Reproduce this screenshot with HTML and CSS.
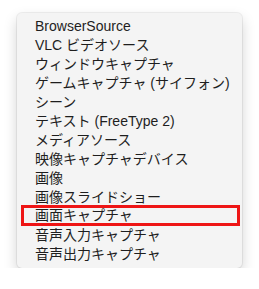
FILE: index.html
```html
<!doctype html>
<html lang="ja">

<head>
  <title>ソースを追加</title>
  <meta charset="utf-8" />
  <link rel="stylesheet" href="styles.css">
</head>

<body>
  <ul class="menu">
    <li class="item">BrowserSource</li>
    <li class="item">VLC ビデオソース</li>
    <li class="item">ウィンドウキャプチャ</li>
    <li class="item">ゲームキャプチャ (サイフォン)</li>
    <li class="item">シーン</li>
    <li class="item">テキスト (FreeType 2)</li>
    <li class="item">メディアソース</li>
    <li class="item">映像キャプチャデバイス</li>
    <li class="item">画像</li>
    <li class="item">画像スライドショー</li>
    <li class="item marked">画面キャプチャ</li>
    <li class="item">音声入力キャプチャ</li>
    <li class="item">音声出力キャプチャ</li>
  </ul>
</body>

</html>
```
FILE: styles.css
```css
html {
  background: #ffffff;
}

body {
  margin: 0;
  padding: 13px 0 0 17px;
  font-family: "Liberation Sans", "Noto Sans CJK JP", sans-serif;
  font-size: 14px;
  color: #1e1e1e;
}

.menu {
  list-style: none;
  margin: 0;
  padding: 4px 0;
  width: 225px;
  box-sizing: border-box;
  background: #f4f4f4;
  border-radius: 5px;
  box-shadow: 0 0 0 1px rgba(0, 0, 0, 0.06), 0 6px 14px rgba(0, 0, 0, 0.18);
}

.item {
  height: 19px;
  line-height: 19px;
  padding-left: 18px;
  white-space: nowrap;
}

/* annotation: the chosen entry */
.marked {
  position: relative;
  top: -1px;
  margin: 0 3px 0 5px;
  padding-left: 13px;
  outline: 3px solid #ee1515;
  outline-offset: -2px;
}
```
